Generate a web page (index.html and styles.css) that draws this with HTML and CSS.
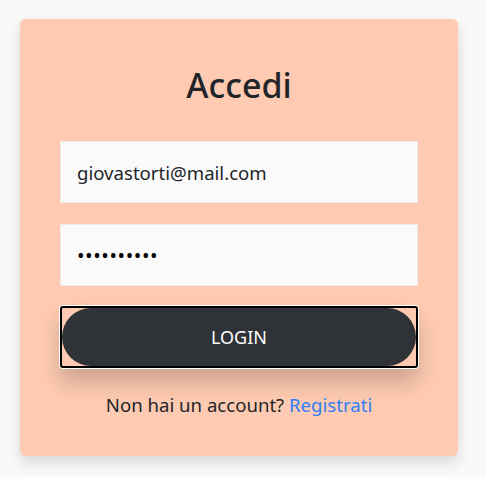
FILE: index.html
```html
<!DOCTYPE html>
<html lang="it">
<head>
<meta charset="utf-8">
<title>Accedi</title>
<link rel="stylesheet" href="styles.css">
</head>
<body>
<div class="card">
  <h1 class="title">Accedi</h1>
  <form class="form">
    <div class="field">giovastorti@mail.com</div>
    <div class="field password">••••••••••</div>
    <div class="btn-focus"><button type="button" class="btn">LOGIN</button></div>
  </form>
  <p class="footer">Non hai un account? <a href="#" class="link">Registrati</a></p>
</div>
</body>
</html>
```
FILE: styles.css
```css
html, body {
  margin: 0;
  padding: 0;
}
body {
  background: #f9f9f9;
  font-family: "Noto Sans", "Open Sans", sans-serif;
  color: #212529;
  padding: 19px 0 0 20px;
  height: 477px;
  box-sizing: border-box;
}
.card {
  width: 438px;
  height: 437px;
  box-sizing: border-box;
  background: #fecab1;
  border-radius: 6px;
  box-shadow: 0 6px 14px rgba(0, 0, 0, 0.14);
  padding: 0 40px;
  display: flex;
  flex-direction: column;
}
.title {
  margin: 43px 0 0;
  font-size: 34px;
  line-height: 46px;
  font-weight: 500;
  text-align: center;
}
.form {
  margin-top: 33px;
  display: flex;
  flex-direction: column;
}
.field {
  height: 62px;
  box-sizing: border-box;
  background: #fafafa;
  border: 1px solid #f0e8e4;
  padding: 0 16px;
  display: flex;
  align-items: center;
  font-size: 18.6px;
  color: #212529;
}
.field + .field {
  margin-top: 21px;
}
.password {
  font-size: 20px;
  letter-spacing: 0.6px;
  color: #000;
}
.btn-focus {
  margin-top: 20px;
  height: 62px;
  box-sizing: border-box;
  border: 2px solid #000;
  border-radius: 3px;
  box-shadow: 0 0 0 1px #fff, 0 14px 22px rgba(0, 0, 0, 0.2);
  display: flex;
}
.btn {
  flex: 1;
  border: 0;
  border-radius: 30px;
  background: #2f3237;
  color: #fff;
  font-family: inherit;
  font-size: 18px;
  margin: 0;
  padding: 0;
}
.footer {
  margin: 24px 0 0;
  text-align: center;
  font-size: 18.6px;
}
.link {
  color: #2f7ff7;
  text-decoration: none;
}
```
